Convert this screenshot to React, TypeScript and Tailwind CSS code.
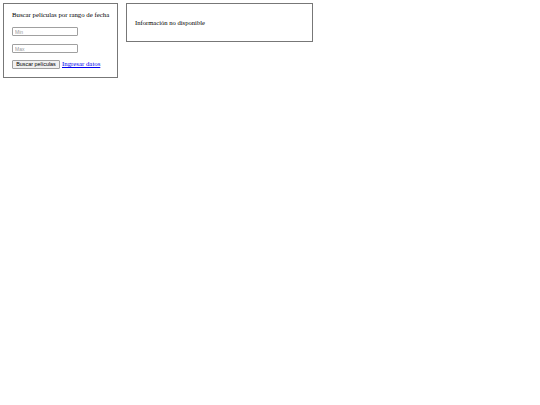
import React from "react"

const serif = { fontFamily: '"Liberation Serif", "Times New Roman", serif' }
const sans = { fontFamily: '"Liberation Sans", Arial, sans-serif' }

const App: React.FC = () => {
  return (
    <div className="flex items-start gap-[8px] p-[3px] bg-white min-h-[405px]" style={serif}>
      <div className="w-[115px] border border-[#777] px-[8px] pt-[6px] pb-[8px] text-black">
        <h4 className="text-[6.8px] leading-[10px] pb-[7px] whitespace-nowrap">
          Buscar películas por rango de fecha
        </h4>
        <input
          placeholder="Min"
          className="block w-[66px] h-[9px] border border-[#a0a0a0] rounded-[1px] px-[2px] text-[5px] leading-[7px] placeholder:text-[#999] outline-none"
          style={sans}
        />
        <input
          placeholder="Max"
          className="block mt-[8px] w-[66px] h-[9px] border border-[#a0a0a0] rounded-[1px] px-[2px] text-[5px] leading-[7px] placeholder:text-[#999] outline-none"
          style={sans}
        />
        <div className="mt-[6px] flex items-center gap-[2px]">
          <button
            className="h-[9px] w-[48px] border border-[#a0a0a0] rounded-[1px] bg-[#f0f0f0] text-[5.4px] leading-[7px] text-black whitespace-nowrap"
            style={sans}
          >
            Buscar películas
          </button>
          <a href="#" className="text-[6.8px] leading-[10px] text-[#0000ee] underline whitespace-nowrap">
            Ingresar datos
          </a>
        </div>
      </div>
      <div className="w-[187px] h-[39px] border border-[#777] px-[8px] flex items-center">
        <p className="text-[6.6px] leading-[9px] text-black whitespace-nowrap">Información no disponible</p>
      </div>
    </div>
  )
}

export default App
